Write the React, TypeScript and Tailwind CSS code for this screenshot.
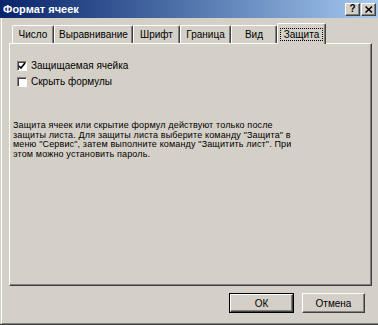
import React from "react";

const tabs = [
  { label: "Число", w: "w-[42px]" },
  { label: "Выравнивание", w: "w-[79px]" },
  { label: "Шрифт", w: "w-[47px]" },
  { label: "Граница", w: "w-[51px]" },
  { label: "Вид", w: "w-[46px]" },
];

function Checkbox({ checked, label }: { checked?: boolean; label: string }) {
  return (
    <div className="flex items-center h-[10px] gap-[4px]">
      <div className="w-[10px] h-[10px] bg-white border-t border-l border-[#808080] border-r border-b border-r-white border-b-white shadow-[inset_1px_1px_#404040] flex items-center justify-center shrink-0">
        {checked && (
          <svg width="8" height="8" viewBox="0 0 8 8" className="block">
            <path d="M1 4 L3 6 L7 1" stroke="#000" strokeWidth="1.6" fill="none" />
          </svg>
        )}
      </div>
      <span className="text-[10px] leading-[10px] text-black whitespace-nowrap">{label}</span>
    </div>
  );
}

function Button({ label, def }: { label: string; def?: boolean }) {
  const inner = (
    <div className="w-full h-full bg-[#d4d0c8] border-t border-l border-white border-r border-b border-r-[#404040] border-b-[#404040] shadow-[inset_-1px_-1px_#808080] flex items-center justify-center text-[10px] text-black">
      {label}
    </div>
  );
  return def ? (
    <div className="w-[65px] h-[20px] border border-black">{inner}</div>
  ) : (
    <div className="w-[63px] h-[20px]">{inner}</div>
  );
}

export default function App() {
  return (
    <div
      className="w-[378px] h-[325px] bg-[#d4d0c8] flex flex-col overflow-hidden text-black"
      style={{ fontFamily: '"Liberation Sans", Arial, sans-serif' }}
    >
      {/* Title bar */}
      <div className="h-[18px] shrink-0 bg-gradient-to-r from-[#0a246a] to-[#a6caf0] flex items-center pl-[3px] pr-[2px]">
        <span className="text-white font-bold text-[11px] leading-none flex-1">Формат ячеек</span>
        <div className="flex gap-[1px]">
          <div className="w-[15px] h-[13px] bg-[#d4d0c8] border-t border-l border-white border-r border-b border-r-[#404040] border-b-[#404040] shadow-[inset_-1px_-1px_#808080] flex items-center justify-center text-[10px] font-bold leading-none">
            ?
          </div>
          <div className="w-[15px] h-[13px] bg-[#d4d0c8] border-t border-l border-white border-r border-b border-r-[#404040] border-b-[#404040] shadow-[inset_-1px_-1px_#808080] flex items-center justify-center">
            <svg width="8" height="7" viewBox="0 0 8 7" className="block">
              <path d="M0.5 0.5 L7 6.5 M7 0.5 L0.5 6.5" stroke="#000" strokeWidth="1.5" fill="none" />
            </svg>
          </div>
        </div>
      </div>

      {/* Body */}
      <div className="flex-1 flex flex-col border-b border-[#404040]">
        <div className="flex-1 flex flex-col border-b border-[#808080] ml-px border-l border-l-white">
          {/* Tabs */}
          <div className="mt-[5px] ml-[10px] h-[20px] flex items-end relative z-10">
            {tabs.map((t) => (
              <div
                key={t.label}
                className={`${t.w} h-[18px] border-t border-l border-white border-r border-r-[#404040] shadow-[inset_-1px_0_#808080] rounded-tl-[2px] rounded-tr-[2px] flex items-center justify-center text-[10px] leading-none whitespace-nowrap`}
              >
                {t.label}
              </div>
            ))}
            <div className="w-[49px] h-[21px] -mb-px bg-[#d4d0c8] border-t border-l border-white border-r border-r-[#404040] shadow-[inset_-1px_0_#808080] rounded-tl-[2px] rounded-tr-[2px] flex items-start justify-center pt-[4px]">
              <span className="border border-dotted border-black px-[3px] h-[13px] flex items-center text-[10px] leading-none whitespace-nowrap">
                Защита
              </span>
            </div>
          </div>

          {/* Panel */}
          <div className="ml-[7px] w-[363px] h-[243px] border-t border-l border-white border-r border-b border-r-[#404040] border-b-[#404040] shadow-[inset_-1px_-1px_#808080] flex flex-col">
            <div className="pt-[17px] pl-[7px] flex flex-col gap-[6px]">
              <Checkbox checked label="Защищаемая ячейка" />
              <Checkbox label="Скрыть формулы" />
            </div>
            <p className="mt-[34px] pl-[3px] text-[9px] leading-[9.5px] tracking-[0.15px] whitespace-nowrap">
              Защита ячеек или скрытие формул действуют только после
              <br />
              защиты листа. Для защиты листа выберите команду "Защита" в
              <br />
              меню "Сервис", затем выполните команду "Защитить лист". При
              <br />
              этом можно установить пароль.
            </p>
          </div>

          {/* Buttons */}
          <div className="mt-[7px] flex justify-end gap-[8px] pr-[13px]">
            <Button label="ОК" def />
            <Button label="Отмена" />
          </div>
        </div>
      </div>
    </div>
  );
}
